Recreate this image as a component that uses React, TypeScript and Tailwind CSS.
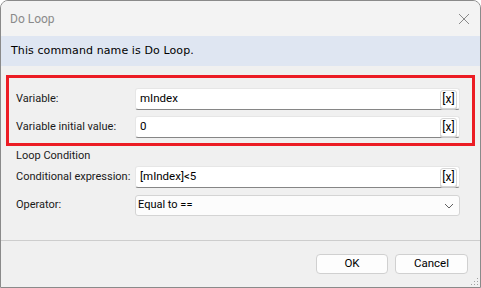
import React from "react";

const font = { fontFamily: 'Roboto, "Noto Sans", sans-serif' };

function XBtn() {
  return (
    <div className="flex h-[19px] w-[17px] items-center justify-center rounded-[3px] border border-[#d6d6d6] bg-white text-[12px] leading-none text-black shadow-[0_1px_0_#c8c8c8]">
      [x]
    </div>
  );
}

function TextRow({ label, value }: { label: string; value: string }) {
  return (
    <div className="flex h-[22px] items-center">
      <div className="w-[119px] whitespace-nowrap text-[11px] text-[#1a1a1a]">{label}</div>
      <div className="flex h-[22px] w-[325px] items-center rounded-[3px] border border-[#e6e6e6] border-b-[#868686] bg-white pl-[4px] pr-[2px]">
        <div className="flex-1 text-[11.5px] text-black">{value}</div>
        <XBtn />
      </div>
    </div>
  );
}

export default function App() {
  return (
    <div
      className="flex h-[288px] w-[481px] flex-col overflow-hidden rounded-t-[8px] border border-[#8a8a8a] bg-[#f0f0f0]"
      style={font}
    >
      <div className="flex h-[35px] items-center justify-between bg-[#f3f3f3] pl-[9px] pr-[8px]">
        <span className="text-[12px] text-[#8a8a8a]">Do Loop</span>
        <svg width="12" height="12" viewBox="0 0 12 12" className="mr-[2px]">
          <path d="M1 1L11 11M11 1L1 11" stroke="#8a8a8a" strokeWidth="1" />
        </svg>
      </div>
      <div className="flex h-[30px] items-center bg-[#dfe6f2] pl-[10px]">
        <span className="text-black" style={{ fontFamily: '"DejaVu Sans", sans-serif', fontSize: "11px", letterSpacing: "0.1px" }}>
          This command name is Do Loop.
        </span>
      </div>
      <div className="ml-[5px] mt-[9px] flex h-[71px] w-[469px] flex-col gap-[6px] border-[3px] border-[#ec1c24] pl-[7px] pt-[10px]">
        <TextRow label="Variable:" value="mIndex" />
        <TextRow label="Variable initial value:" value="0" />
      </div>
      <div className="flex flex-col pl-[15px]">
        <div className="mt-[1px] h-[18px] text-[11px] leading-[18px] text-[#1a1a1a]">Loop Condition</div>
        <div className="mt-[1px]">
          <TextRow label="Conditional expression:" value="[mIndex]<5" />
        </div>
        <div className="mt-[7px] flex h-[21px] items-center">
          <div className="w-[119px] whitespace-nowrap text-[11px] text-[#1a1a1a]">Operator:</div>
          <div className="flex h-[21px] w-[325px] items-center justify-between rounded-[3px] border border-[#d4d4d4] bg-[#fcfcfc] pl-[2px] pr-[5px]">
            <span className="text-[11px] text-black">Equal to ==</span>
            <svg width="10" height="6" viewBox="0 0 10 6">
              <path d="M1 1L5 5L9 1" stroke="#606060" strokeWidth="1" fill="none" />
            </svg>
          </div>
        </div>
      </div>
      <div className="mt-[24px] h-px bg-[#cdcdcd]" />
      <div className="relative flex flex-1 justify-end gap-[7px] pr-[12px] pt-[13px]">
        <div className="flex h-[20px] w-[72px] items-center justify-center rounded-[4px] border border-[#d0d0d0] bg-[#fdfdfd] text-[11.5px] text-black">
          OK
        </div>
        <div className="flex h-[20px] w-[73px] items-center justify-center rounded-[4px] border border-[#d0d0d0] bg-[#fdfdfd] text-[11.5px] text-black">
          Cancel
        </div>
        <svg width="8" height="8" viewBox="0 0 8 8" className="absolute bottom-[1px] right-[1px]">
          <rect x="6" y="0" width="1" height="1" fill="#a0a0a0" />
          <rect x="3" y="3" width="1" height="1" fill="#a0a0a0" />
          <rect x="6" y="3" width="1" height="1" fill="#a0a0a0" />
          <rect x="0" y="6" width="1" height="1" fill="#a0a0a0" />
          <rect x="3" y="6" width="1" height="1" fill="#a0a0a0" />
          <rect x="6" y="6" width="1" height="1" fill="#a0a0a0" />
        </svg>
      </div>
    </div>
  );
}
